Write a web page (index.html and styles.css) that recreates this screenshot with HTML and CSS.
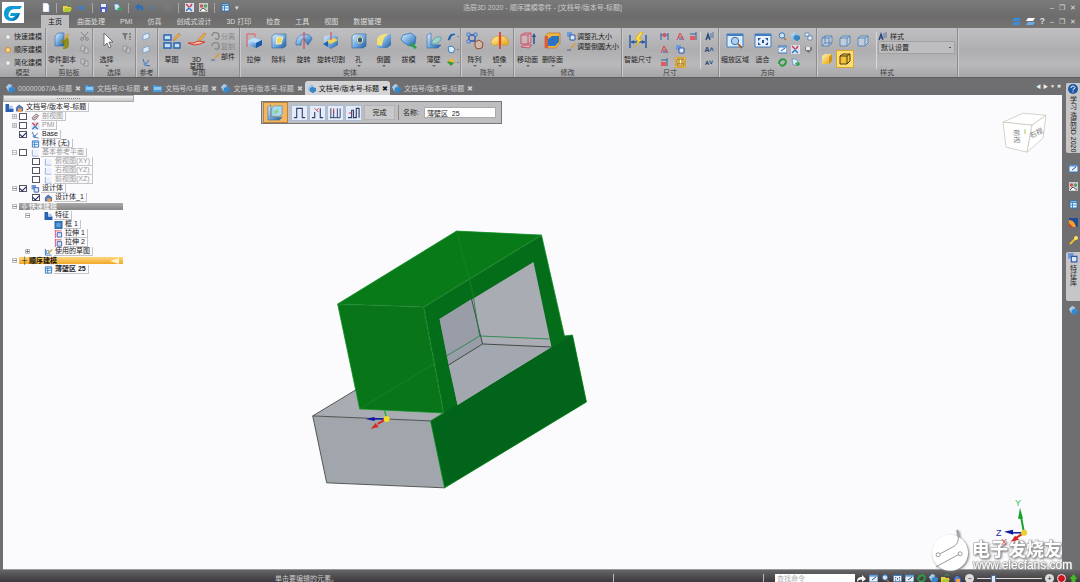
FILE: index.html
```html
<!DOCTYPE html>
<html lang="zh-CN">
<head>
  <meta charset="UTF-8">
  <meta name="viewport" content="width=device-width, initial-scale=1">
  <title>浩辰3D 2020</title>
  <link rel="stylesheet" href="styles.css">
</head>
<body>
  <!-- Shared icons -->
  <svg class="sprite" aria-hidden="true">
    <defs>
      <linearGradient id="blue" x1="0" y1="0" x2="1" y2="1">
        <stop offset="0" stop-color="#e4f2fc"/><stop offset=".5" stop-color="#76ade0"/><stop offset="1" stop-color="#1f5a9c"/>
      </linearGradient>
      <linearGradient id="gold" x1="0" y1="0" x2="1" y2="1">
        <stop offset="0" stop-color="#fff2a8"/><stop offset="1" stop-color="#e3a010"/>
      </linearGradient>
    </defs>
    <symbol id="i-copy" viewBox="0 0 18 18"><path d="M2 4l3-3h6v13H2z" fill="url(#blue)" stroke="#2c64a4" stroke-width=".6"/><path d="M9 12c0-5 3-5 3 0s3 5 3-1-2-6-2-2 0 8-3 7" fill="none" stroke="#8c8a10" stroke-width="1.8"/><path d="M15 3l-3 4M14 2l2 2" stroke="#e9a01c" stroke-width="1.5"/></symbol>
    <symbol id="i-pointer" viewBox="0 0 18 18"><path d="M6 1v13l3-3 2 5 2-1-2-5h4z" fill="#fff" stroke="#555" stroke-width=".8"/></symbol>
    <symbol id="i-sketch" viewBox="0 0 18 18"><path d="M1 3h7v5H1zM1 11h7v5H1zM11 11h6v5h-6z" fill="#c6ddf2" stroke="#2463b4" stroke-width="1.4"/><path d="M10 8l6-7 1 2-6 6z" fill="#f3b33c" stroke="#a3661c" stroke-width=".5"/></symbol>
    <symbol id="i-sketch3d" viewBox="0 0 18 18"><path d="M0 11h6l4-2 7 1-5 2-6 1z" fill="#f5c0b0" stroke="#d6392d"/><path d="M10 8l6-7 2 1-6 7z" fill="#f3b33c" stroke="#a3661c" stroke-width=".5"/></symbol>
    <symbol id="i-extrude" viewBox="0 0 18 18"><path d="M2 15V2h8v3" fill="none" stroke="#e25a62"/><path d="M3 9l5-3 9 2v5l-6 3-8-3z" fill="url(#blue)"/><path d="M3 9l8 2 6-3-9-2z" fill="#b9dcf8"/><path d="M11 11l6-3v5l-6 3z" fill="#1b5aa6"/></symbol>
    <symbol id="i-cut" viewBox="0 0 18 18"><path d="M2 4l3-2h11v12l-3 2H2z" fill="url(#blue)" stroke="#316aa9" stroke-width=".6"/><path d="M7 5h6l-2 7H6z" fill="#ecd85a" stroke="#fff" stroke-width=".7"/></symbol>
    <symbol id="i-revolve" viewBox="0 0 18 18"><path d="M1 13C0 0 16 0 17 7l-4 6-4-5h2C9 5 6 7 6 13z" fill="url(#blue)" stroke="#2b65a8" stroke-width=".6"/><path d="M9 0v17" stroke="#e1353a"/></symbol>
    <symbol id="i-revcut" viewBox="0 0 18 18"><path d="M2 5l7-3 7 3v8l-7 4-7-4z" fill="url(#blue)"/><path d="M4 9l8-3 4 2-7 4z" fill="#f2d35a"/><path d="M1 12l5-3v6z" fill="#245fa9"/><path d="M9 0v8" stroke="#e1353a"/></symbol>
    <symbol id="i-hole" viewBox="0 0 18 18"><path d="M2 4l3-2h11v12l-3 2H2z" fill="url(#blue)" stroke="#316aa9" stroke-width=".6"/><ellipse cx="10" cy="8" rx="2.6" ry="3.2" fill="#2b5a86" stroke="#f3e48b"/></symbol>
    <symbol id="i-round" viewBox="0 0 18 18"><path d="M2 15V8c1-4 5-6 9-6h5v11l-4 3H2z" fill="url(#blue)"/><path d="M2 13V8c1-4 5-6 9-6h3C9 4 8 8 7 14z" fill="#f6df73"/></symbol>
    <symbol id="i-draft" viewBox="0 0 18 18"><path d="M3 3l8-2 5 4-1 7-6 2-6-4-2-3z" fill="url(#blue)" stroke="#1f6eb4" stroke-width=".7"/><path d="M10 11l4 1 3 4-3 1-1-2-2 0z" fill="#29a04a"/></symbol>
    <symbol id="i-shell" viewBox="0 0 18 18"><path d="M2 3l4-2v12h10l-3 3H2z" fill="url(#blue)" stroke="#316aa9" stroke-width=".6"/><path d="M7 9l4-4h5v3l-5 4H7z" fill="#9dd4c1" stroke="#4c8fc0" stroke-width=".7"/></symbol>
    <symbol id="i-region" viewBox="0 0 18 18"><path d="M1 3l3-2v13h12l-3 3H1z" fill="url(#blue)" stroke="#316aa9" stroke-width=".6"/><path d="M5 4l3-2h8v9l-3 2H5z" fill="#a9d9ee" stroke="#4c8fc0" stroke-width=".7"/><path d="M7 8l5-3v4l-4 2z" fill="#8fcf9a"/></symbol>
    <symbol id="i-pattern" viewBox="0 0 18 18"><path d="M3 3h6v6H3z" fill="none" stroke="#2a56b0" stroke-width="1.3"/><path d="M1 1h3v3H1zM8 1h3v3H8zM1 8h3v3H1z" fill="#9fc3ee" stroke="#2a56b0" stroke-width=".6"/><path d="M9 10l4-2 4 3-1 5-5 1-2-3z" fill="#d0b9a8" stroke="#98482c"/></symbol>
    <symbol id="i-mirror" viewBox="0 0 18 18"><path d="M0 11c0-4 4-7 8-7v8c-3 2-6 2-8-1zM18 11c0-4-4-7-8-7v8c3 2 6 2 8-1z" fill="url(#gold)" stroke="#d48b10" stroke-width=".6"/><path d="M9 0v17" stroke="#e23424" stroke-width="1.6"/></symbol>
    <symbol id="i-moveface" viewBox="0 0 18 18"><path d="M2 3l4-2h6v9l-3 2H2zM2 3h7l3-2M9 3v9M2 15l3-2h8l-3 3z" fill="#dfb5c3" fill-opacity=".5" stroke="#cf5268"/><path d="M15 12V4" stroke="#23549a" stroke-width="1.5"/><path d="M15 1l2 4h-4z" fill="#23549a"/></symbol>
    <symbol id="i-delface" viewBox="0 0 18 18"><path d="M1 4l3-3h12v10l-4 5H1z" fill="#f0b53e" stroke="#b36d14" stroke-width=".6"/><path d="M4 7l4-3h7v6l-4 4H4z" fill="#2974c4"/><path d="M1 4h3v12H1z" fill="#e2583b"/></symbol>
    <symbol id="i-smartdim" viewBox="0 0 18 18"><path d="M1 3v13M17 3v13M2 10h14" stroke="#235aa4" stroke-width="1.4"/><path d="M2 10l3-2v4zM16 10l-3-2v4z" fill="#235aa4"/><path d="M11 0L6 8h3l-3 7 7-8h-3l4-7z" fill="#ffe23b" stroke="#cf9312" stroke-width=".5"/></symbol>
    <symbol id="i-zoomarea" viewBox="0 0 18 18"><path d="M1 2h16v13H1z" fill="#dceafa" stroke="#3f7dc3"/><path d="M1 2h16v2H1z" fill="#3f7dc3"/><circle cx="9" cy="9" r="3.7" fill="#a9d0ef" stroke="#3c70a8"/><path d="M12 12l4 4" stroke="#a06232" stroke-width="1.8"/></symbol>
    <symbol id="i-fit" viewBox="0 0 18 18"><path d="M1 2h16v13H1z" fill="#e8f1fb" stroke="#3f7dc3"/><path d="M1 2h16v2H1z" fill="#3f7dc3"/><path d="M4 6h3L4 9zM14 6h-3l3 3zM4 13h3l-3-3zM14 13h-3l3-3zM8 8h2v3H8z" fill="#21508e"/></symbol>

    <symbol id="s-page" viewBox="0 0 9 9"><path d="M2 0h4l2 2v7H2z" fill="#fff" stroke="#9db8d6" stroke-width=".6"/></symbol>
    <symbol id="s-open" viewBox="0 0 9 9"><path d="M0 3h4l1 1h3v4H0z" fill="#e8d648"/><path d="M2 5h7L7 9H0z" fill="#b5ca30"/><path d="M4 2c1-2 3-2 4 0" fill="none" stroke="#49b04b"/></symbol>
    <symbol id="s-link" viewBox="0 0 9 9"><path d="M1 3h4l3 2-3 2H2z" fill="#3d7fc4"/></symbol>
    <symbol id="s-save" viewBox="0 0 9 9"><path d="M1 1h7v8H1z" fill="#4b61c4"/><path d="M2 1h5v3H2zM3 6h3v3H3z" fill="#f0f3fc"/></symbol>
    <symbol id="s-part" viewBox="0 0 9 9"><path d="M0 3l3-3 3 1v2l3 1v3L6 9 2 7z" fill="url(#blue)"/><path d="M3 4l3-1 3 2-3 4-3-2z" fill="#3389cb"/></symbol>
    <symbol id="s-partgreen" viewBox="0 0 9 9"><path d="M1 1h4l2 3v3H2z" fill="#d8e9f7" stroke="#367eb8" stroke-width=".6"/><path d="M4 5l2 3 3-1-1-3z" fill="#36a452"/></symbol>
    <symbol id="s-undo" viewBox="0 0 9 9"><path d="M0 4l4-4v2c4 0 6 3 3 7 0-3-1-3-3-3v2z" fill="#2d6eb5"/></symbol>
    <symbol id="s-undoff" viewBox="0 0 9 9"><path d="M0 4l4-4v2c4 0 6 3 3 7 0-3-1-3-3-3v2z" fill="#888"/></symbol>
    <symbol id="s-mark" viewBox="0 0 9 9"><path d="M0 0h9v9H0z" fill="#dce3ee"/><path d="M1 1l3 3M7 1L5 4" stroke="#d33a55" stroke-width="1.5"/><path d="M1 8l3-3 3 3" fill="none" stroke="#327bc8" stroke-width="1.5"/></symbol>
    <symbol id="s-sheet" viewBox="0 0 9 9"><path d="M1 1h7v7H1z" fill="#eef6fd" stroke="#2f72b8"/><path d="M1 2.500h7M2 5h5M3.500 2v6" stroke="#3c8ad0"/></symbol>
    <symbol id="s-cutoff" viewBox="0 0 9 9"><path d="M1 0l5 6M8 0L3 6" stroke="#888"/><circle cx="2" cy="7" r="1.400" fill="none" stroke="#888"/><circle cx="7" cy="7" r="1.400" fill="none" stroke="#888"/></symbol>
    <symbol id="s-copyoff" viewBox="0 0 9 9"><path d="M1 1h4v5H1zM4 3h4v5H4z" fill="#c6c6c6" stroke="#8b8b8b" stroke-width=".8"/></symbol>
    <symbol id="s-filter" viewBox="0 0 9 9"><path d="M0 1h6L4 4v4L2 6V4z" fill="#777"/><path d="M8 1v7" stroke="#4a4a4a" stroke-dasharray="2 1"/></symbol>
    <symbol id="s-plane" viewBox="0 0 9 9"><path d="M1 3l6-2v5L1 8z" fill="#dfeaf5" stroke="#6c9fd0" stroke-width=".8"/></symbol>
    <symbol id="s-axes" viewBox="0 0 9 9"><path d="M1 1l2 6 5 1M3 7l4-5" fill="none" stroke="#3b6daa"/><circle cx="3" cy="6" r="1.500" fill="#5c95cf"/></symbol>
    <symbol id="s-rotoff" viewBox="0 0 9 9"><path d="M1 4C1-1 8 0 8 4S5 8 4 6" fill="none" stroke="#8a8a8a" stroke-width="1.500"/></symbol>
    <symbol id="s-pencil" viewBox="0 0 9 9"><path d="M0 8h4" stroke="#3e6ba7"/><path d="M3 6l5-5 1 1-5 5z" fill="#d69d33"/></symbol>
    <symbol id="s-usedsketch" viewBox="0 0 9 9"><path d="M1 1v7h7" fill="none" stroke="#2c6fb6"/><path d="M2 3h3v3H2z" fill="#fff" stroke="#2c6fb6" stroke-width=".8"/><path d="M4 6l4-5 1 1-4 5z" fill="#d69d33"/></symbol>
    <symbol id="s-rib" viewBox="0 0 9 9"><path d="M1 7c3 1 0-5 7-5" fill="none" stroke="#2264a9" stroke-width="2.200"/><path d="M4 1h4" stroke="#a9d6f5"/></symbol>
    <symbol id="s-gem" viewBox="0 0 9 9"><path d="M1 2l4-1 3 3-2 4-4-1z" fill="#d8eaf9" stroke="#3e7cc0"/></symbol>
    <symbol id="s-section" viewBox="0 0 9 9"><path d="M1 5l4-4 3 2-4 5-3-1z" fill="#ddd" stroke="#777"/><path d="M2 6l5-3" stroke="#b55"/></symbol>
    <symbol id="s-add" viewBox="0 0 9 9"><path d="M0 4l4-2 4 2-4 4z" fill="#2f9b44"/><path d="M1 3l3-3 3 2v3z" fill="#efb53a"/></symbol>
    <symbol id="s-dimr" viewBox="0 0 9 9"><path d="M1 1v7M8 1v7M1 3h7" stroke="#355ea2"/><path d="M3 1h3v4H3z" fill="#de5361"/></symbol>
    <symbol id="s-angle" viewBox="0 0 9 9"><path d="M1 8l3-7 4 7M2 5h5" fill="none" stroke="#d6464f"/><path d="M3 7h4" stroke="#2f62aa"/></symbol>
    <symbol id="s-coord" viewBox="0 0 9 9"><path d="M1 4h5v4H1z" fill="#e45a60"/><path d="M7 0v8M1 2h6" stroke="#35619f"/></symbol>
    <symbol id="s-grid" viewBox="0 0 9 9"><path d="M1 1h7v7H1zM3 1v5M6 1v5M1 6h7" fill="#fff4a4" stroke="#9b6417"/></symbol>
    <symbol id="s-text" viewBox="0 0 9 9"><path d="M1 8l2-6 2 6M2 6h2" fill="none" stroke="#1f3f78" stroke-width="1.200"/><path d="M6 1v5M8 0v6" stroke="#5376a7"/></symbol>
    <symbol id="s-zoom" viewBox="0 0 9 9"><circle cx="4" cy="3.500" r="2.700" fill="#cfe3f5" stroke="#3573b5"/><path d="M6 6l2 2" stroke="#aa6a33" stroke-width="1.500"/></symbol>
    <symbol id="s-win" viewBox="0 0 9 9"><path d="M0 1h9v7H0z" fill="#e9f2fb" stroke="#3e7ac0"/><path d="M0 2h9" stroke="#3e7ac0"/><path d="M3 6l4-3" stroke="#305b91"/></symbol>
    <symbol id="s-greenrot" viewBox="0 0 9 9"><path d="M1 6c0-5 5-6 7-3M8 3c0 5-5 6-6 3" fill="none" stroke="#2c9b48" stroke-width="1.900"/></symbol>
    <symbol id="s-stack" viewBox="0 0 9 9"><path d="M1 1h4v3H1zM4 4h4v4H4z" fill="#edf4fb" stroke="#5683b6" stroke-width=".8"/></symbol>
    <symbol id="s-heart" viewBox="0 0 9 9"><path d="M1 2h7v3L4.500 8 1 5z" fill="#777"/><path d="M2 2h4v3H2z" fill="#e7e7e7"/></symbol>
    <symbol id="s-key" viewBox="0 0 9 9"><path d="M1 8l5-5" stroke="#f0c02c" stroke-width="1.800"/><circle cx="7" cy="2" r="2" fill="#ffe36b"/></symbol>
    <symbol id="s-color" viewBox="0 0 9 9"><path d="M0 0h9v9H0z" fill="#244a97"/><path d="M0 9V2c4 0 6 3 7 7z" fill="#f0a12c"/><path d="M0 9V5l4 4z" fill="#d83c2e"/></symbol>
    <symbol id="s-people" viewBox="0 0 9 9"><path d="M0 0h9v9H0z" fill="#ccc"/><circle cx="2.500" cy="3" r="1.700" fill="#d05058"/><circle cx="6.500" cy="3" r="1.700" fill="#53a463"/><path d="M1 8l3-3 4 3" fill="#fff" stroke="#555"/></symbol>
    <symbol id="s-frame" viewBox="0 0 9 9"><path d="M0 0h9v9H0z" fill="#2d6db0"/><path d="M2 2h5v5H2z" fill="#5ba0dc"/></symbol>
    <symbol id="s-doc" viewBox="0 0 9 9"><path d="M0 1h3v1h6v6H0z" fill="#4a9bdc"/><path d="M1 3h7v3H1z" fill="#8cc8f2"/></symbol>
    <symbol id="s-ext" viewBox="0 0 9 9"><path d="M1 0v9M1 1h7" stroke="#dd4864" fill="none"/><path d="M3 3h5v5H3z" fill="#d9e4fa" stroke="#3c57ad"/></symbol>
    <symbol id="s-planebox" viewBox="0 0 9 9"><path d="M1 1v7h7" fill="none" stroke="#8fa7dc"/><path d="M2 1h6v6H2z" fill="#eef1fc"/></symbol>
    <symbol id="s-bodies" viewBox="0 0 9 9"><path d="M0 0h5v5H0z" fill="#6d9ad8"/><path d="M3 3h5v5H3z" fill="#dce8fa" stroke="#3159a6"/></symbol>
    <symbol id="s-feature" viewBox="0 0 9 9"><path d="M0 0h4v5h5v4H0z" fill="#2b62b0"/><path d="M4 2h4v3H4z" fill="#a9c9ef"/></symbol>
    <symbol id="s-home" viewBox="0 0 9 9"><path d="M1 8V4l3-3 4 3v4z" fill="#5a7fc4" stroke="#25427f" stroke-width=".7"/><path d="M3 5h4v4H3z" fill="#f0a248"/></symbol>
    <symbol id="s-cube" viewBox="0 0 12 12"><path d="M1 3l3-2h7v7l-3 3H1zM1 3h7v8M8 3l3-2M4 1v7h7M4 8l-3 3" fill="#c8dcf0" fill-opacity=".6" stroke="#5585b8" stroke-width=".9"/></symbol>
    <symbol id="s-cubehid" viewBox="0 0 12 12"><path d="M1 3l3-2h7v7l-3 3H1zM1 3h7v8M8 3l3-2" fill="#c8dcf0" fill-opacity=".6" stroke="#5585b8" stroke-width=".9"/></symbol>
    <symbol id="s-cubegold" viewBox="0 0 12 12"><path d="M1 3l3-2h7v7l-3 3H1z" fill="url(#gold)"/><path d="M8 4l3-3v7l-3 3z" fill="#d19014"/></symbol>
    <symbol id="s-cubeedge" viewBox="0 0 12 12"><path d="M1 3l3-2h7v7l-3 3H1zM1 3h7v8M8 3l3-2" fill="#f3c43a" stroke="#4d3a10"/></symbol>
    <symbol id="p-step" viewBox="0 0 14 12"><path d="M1 11h3V1h6v10h3" fill="none" stroke="#333b6c" stroke-width="1.200"/></symbol>
    <symbol id="p-open" viewBox="0 0 14 12"><path d="M1 11h3V5M10 1v10h3" fill="none" stroke="#333b6c" stroke-width="1.200"/><path d="M4 1l4 4M8 1L6 3" stroke="#cf3649"/></symbol>
    <symbol id="p-dir" viewBox="0 0 14 12"><path d="M1 11h11M2 1v10M5 3v8M9 1v10M12 1v10" fill="none" stroke="#333b6c"/><path d="M5 1v5" stroke="#cf3649"/></symbol>
    <symbol id="p-thick" viewBox="0 0 14 12"><path d="M1 11h4V3h2v8h3V1h3v10" fill="none" stroke="#333b6c" stroke-width="1.200"/><path d="M2 6h3" stroke="#cf3649"/></symbol>
  </svg>

  <!-- Title bar and ribbon tabs -->
  <header class="app-header">
    <button class="app-logo" aria-label="浩辰3D">
      <svg viewBox="0 0 22 20"><path d="M20 3H9C4 3 2 7 2 11s3 7 7 7c5 0 7-3 9-8H9l-1 3h5c-4 4-8 1-6-3 1-3 3-4 6-4h5z" fill="#0d9bd6"/><path d="M18 10c-1 5-4 8-9 8 3-2 4-3 5-5z" fill="#0876b2"/></svg>
    </button>
    <div class="header-rows">
      <div class="title-row">
        <div class="quick-tools">
          <button aria-label="新建"><svg><use href="#s-page"/></svg></button>
          <i class="tool-sep"></i>
          <button aria-label="打开"><svg><use href="#s-open"/></svg></button>
          <button aria-label="链接"><svg><use href="#s-link"/></svg></button>
          <i class="tool-sep"></i>
          <button aria-label="保存"><svg><use href="#s-save"/></svg></button>
          <button aria-label="另存"><svg><use href="#s-partgreen"/></svg></button>
          <i class="tool-sep"></i>
          <button aria-label="撤销"><svg><use href="#s-undo"/></svg></button>
          <button aria-label="重做" class="faint"><svg><use href="#s-link"/></svg></button>
          <button aria-label="恢复" class="faint"><svg><use href="#s-undoff"/></svg></button>
          <i class="tool-sep"></i>
          <button aria-label="标记"><svg><use href="#s-mark"/></svg></button>
          <button aria-label="检查"><svg><use href="#s-people"/></svg></button>
          <i class="tool-sep"></i>
          <button aria-label="属性表"><svg><use href="#s-sheet"/></svg></button>
          <button aria-label="自定义">▾</button>
        </div>
        <p class="app-title">浩辰3D 2020 - 顺序建模零件 - [文档号/版本号-标题]</p>
        <div class="window-tools">
          <button aria-label="最小化">–</button>
          <button aria-label="还原">❐</button>
          <button aria-label="关闭">✕</button>
        </div>
      </div>
      <nav class="tab-row">
        <a href="#" class="tab active">主页</a>
        <a href="#" class="tab">曲面处理</a>
        <a href="#" class="tab">PMI</a>
        <a href="#" class="tab">仿真</a>
        <a href="#" class="tab">创成式设计</a>
        <a href="#" class="tab">3D 打印</a>
        <a href="#" class="tab">检查</a>
        <a href="#" class="tab">工具</a>
        <a href="#" class="tab">视图</a>
        <a href="#" class="tab">数据管理</a>
        <div class="window-tools">
          <button aria-label="窗口层叠"><svg viewBox="0 0 9 9"><path d="M2 1h7L7 4H0zM2 5h7L7 8H0z" fill="#3e8bd8"/></svg></button>
          <button aria-label="窗口平铺"><svg viewBox="0 0 9 9"><path d="M2 1h7L7 4H0z" fill="#fff"/><path d="M2 5h7L7 8H0z" fill="#68aeea"/></svg></button>
          <button aria-label="帮助" class="help">?</button>
          <button aria-label="最小化文档">–</button>
          <button aria-label="还原文档">❐</button>
          <button aria-label="关闭文档">✕</button>
        </div>
      </nav>
    </div>
  </header>

  <!-- Ribbon -->
  <div class="ribbon">
    <section class="group">
      <div class="group-body modes">
        <label><input type="radio" name="mode">快速建模</label>
        <label><input type="radio" name="mode" checked>顺序建模</label>
        <label><input type="radio" name="mode">简化建模</label>
      </div>
      <h2>模型</h2>
    </section>
    <section class="group">
      <div class="group-body">
        <button class="big drop"><svg><use href="#i-copy"/></svg>零件副本</button>
        <div class="smalls">
          <button aria-label="剪切"><svg><use href="#s-cutoff"/></svg></button>
          <button aria-label="复制"><svg><use href="#s-copyoff"/></svg></button>
          <button aria-label="粘贴"><svg><use href="#s-copyoff"/></svg></button>
        </div>
      </div>
      <h2>剪贴板</h2>
    </section>
    <section class="group">
      <div class="group-body">
        <button class="big drop"><svg><use href="#i-pointer"/></svg>选择</button>
        <div class="smalls">
          <button aria-label="过滤器"><svg><use href="#s-filter"/></svg></button>
          <button aria-label="选择选项"><svg><use href="#s-copyoff"/></svg></button>
        </div>
      </div>
      <h2>选择</h2>
    </section>
    <section class="group">
      <div class="group-body">
        <div class="smalls">
          <button aria-label="平面"><svg><use href="#s-plane"/></svg></button>
          <button aria-label="参考平面"><svg><use href="#s-plane"/></svg></button>
          <button aria-label="坐标系"><svg><use href="#s-axes"/></svg></button>
        </div>
      </div>
      <h2>参考</h2>
    </section>
    <section class="group">
      <div class="group-body">
        <button class="big"><svg><use href="#i-sketch"/></svg>草图</button>
        <button class="big"><svg><use href="#i-sketch3d"/></svg>3D<br>草图</button>
        <div class="texts">
          <button disabled><svg><use href="#s-rotoff"/></svg>分离</button>
          <button disabled><svg><use href="#s-rotoff"/></svg>复制</button>
          <button><svg><use href="#s-pencil"/></svg>部件</button>
        </div>
      </div>
      <h2>草图</h2>
    </section>
    <section class="group">
      <div class="group-body">
        <button class="big"><svg><use href="#i-extrude"/></svg>拉伸</button>
        <button class="big"><svg><use href="#i-cut"/></svg>除料</button>
        <button class="big"><svg><use href="#i-revolve"/></svg>旋转</button>
        <button class="big"><svg><use href="#i-revcut"/></svg>旋转切割</button>
        <button class="big drop"><svg><use href="#i-hole"/></svg>孔</button>
        <button class="big drop"><svg><use href="#i-round"/></svg>倒圆</button>
        <button class="big"><svg><use href="#i-draft"/></svg>拔模</button>
        <button class="big drop"><svg><use href="#i-shell"/></svg>薄壁</button>
        <div class="smalls arrows">
          <button aria-label="扫掠"><svg><use href="#s-rib"/></svg></button>
          <button aria-label="放样"><svg><use href="#s-gem"/></svg></button>
          <button aria-label="添加体"><svg><use href="#s-add"/></svg></button>
        </div>
      </div>
      <h2>实体</h2>
    </section>
    <section class="group">
      <div class="group-body">
        <button class="big drop"><svg><use href="#i-pattern"/></svg>阵列</button>
        <button class="big drop"><svg><use href="#i-mirror"/></svg>镜像</button>
      </div>
      <h2>阵列</h2>
    </section>
    <section class="group">
      <div class="group-body">
        <button class="big drop"><svg><use href="#i-moveface"/></svg>移动面</button>
        <button class="big drop"><svg><use href="#i-delface"/></svg>删除面</button>
        <div class="texts">
          <button><svg><use href="#s-bodies"/></svg>调整孔大小</button>
          <button><svg><use href="#s-pencil"/></svg>调整倒圆大小</button>
        </div>
      </div>
      <h2>修改</h2>
    </section>
    <section class="group">
      <div class="group-body">
        <button class="big"><svg><use href="#i-smartdim"/></svg>智能尺寸</button>
        <div class="icon-grid wide-first">
          <button aria-label="间距"><svg><use href="#s-dimr"/></svg></button>
          <button aria-label="角度"><svg><use href="#s-angle"/></svg></button>
          <button aria-label="坐标标注"><svg><use href="#s-coord"/></svg></button>
          <button aria-label="夹角"><svg><use href="#s-angle"/></svg></button>
          <button aria-label="复制尺寸"><svg><use href="#s-bodies"/></svg></button>
          <span></span>
          <button aria-label="坐标尺寸"><svg><use href="#s-coord"/></svg></button>
          <button aria-label="尺寸网格" class="on"><svg><use href="#s-grid"/></svg></button>
        </div>
        <div class="smalls divided">
          <button aria-label="文字样式"><svg><use href="#s-text"/></svg></button>
          <button aria-label="增大文字" class="letter">A˄</button>
          <button aria-label="减小文字" class="letter">ᴀ˅</button>
        </div>
      </div>
      <h2>尺寸</h2>
    </section>
    <section class="group">
      <div class="group-body">
        <button class="big"><svg><use href="#i-zoomarea"/></svg>缩放区域</button>
        <button class="big"><svg><use href="#i-fit"/></svg>适合</button>
        <div class="icon-grid">
          <button aria-label="缩放"><svg><use href="#s-zoom"/></svg></button>
          <button aria-label="前视图"><svg><use href="#s-part"/></svg></button>
          <button aria-label="层叠"><svg><use href="#s-stack"/></svg></button>
          <button aria-label="平移"><svg><use href="#s-win"/></svg></button>
          <button aria-label="旋转视图"><svg><use href="#s-mark"/></svg></button>
          <button aria-label="常用视图"><svg><use href="#s-heart"/></svg></button>
          <button aria-label="刷新"><svg><use href="#s-greenrot"/></svg></button>
          <button aria-label="视图面"><svg><use href="#s-partgreen"/></svg></button>
        </div>
      </div>
      <h2>方向</h2>
    </section>
    <section class="group">
      <div class="group-body">
        <div class="view-styles">
          <button aria-label="线框"><svg><use href="#s-cube"/></svg></button>
          <button aria-label="隐藏线"><svg><use href="#s-cubehid"/></svg></button>
          <button aria-label="可见边"><svg><use href="#s-cubehid"/></svg></button>
          <button aria-label="着色"><svg><use href="#s-cubegold"/></svg></button>
          <button aria-label="带边着色" class="on"><svg><use href="#s-cubeedge"/></svg></button>
        </div>
        <div class="style-pick">
          <label for="style"><svg><use href="#s-text"/></svg>样式</label>
          <select id="style"><option>默认设置</option></select>
        </div>
      </div>
      <h2>样式</h2>
    </section>
  </div>

  <div class="work">
    <div class="work-main">
      <!-- Open documents -->
      <nav class="doc-tabs">
        <div class="doc"><svg><use href="#s-part"/></svg><a href="#">00000067/A-标题</a><button aria-label="关闭">✖</button></div>
        <div class="doc"><svg><use href="#s-doc"/></svg><a href="#">文档号/0-标题</a><button aria-label="关闭">✖</button></div>
        <div class="doc"><svg><use href="#s-doc"/></svg><a href="#">文档号/0-标题</a><button aria-label="关闭">✖</button></div>
        <div class="doc"><svg><use href="#s-part"/></svg><a href="#">文档号/版本号-标题</a><button aria-label="关闭">✖</button></div>
        <div class="doc active"><svg><use href="#s-part"/></svg><a href="#">文档号/版本号-标题</a><button aria-label="关闭">✖</button></div>
        <div class="doc"><svg><use href="#s-part"/></svg><a href="#">文档号/版本号-标题</a><button aria-label="关闭">✖</button></div>
        <div class="doc-nav">
          <button aria-label="上一个">◀</button><button aria-label="下一个">▶</button><button aria-label="列表">▼</button><button aria-label="关闭文档">✖</button>
        </div>
      </nav>

      <main class="canvas">
        <!-- Model, view cube and axes -->
        <svg class="scene" viewBox="3 95 1060 474" preserveAspectRatio="xMidYMid meet">
          <g stroke-linejoin="round">
            <path d="M313 416l43-26 4 19 84 4-13 8z" fill="#a9adb3"/>
            <path d="M313 416l118 5 14 67-118-5z" fill="#a1a5ac"/>
            <path d="M356 390l-43 26 118 5M313 416l14 67 118 5" fill="none" stroke="#333a33" stroke-width=".8"/>
            <path d="M338 304l119-73 85 4-118 72z" fill="#087a18"/>
            <path d="M338 304l86 3 20 106-84-4z" fill="#077518"/>
            <path d="M424 307l118-72 23 101 8-1 14 67-142 86-14-67 13-8z" fill="#046d19"/>
            <path d="M431 421l142-86 14 67-142 86z" fill="#02631a"/>
            <path d="M360 409l76-46M457 231l18 69M424 307l20 106M338 304l86 3 118-72" fill="none" stroke="#178428" stroke-opacity=".5" stroke-width="2"/>
            <path d="M338 304l119-73 85 4 23 101 8-1 14 67-142 86-14-67 13-8-84-4z" fill="none" stroke="#0d8e22" stroke-width=".8"/>
            <path d="M440 319l94-57 18 85-94 58z" fill="#a9acb3"/>
            <path d="M440 319l32-20 11 45-34 21z" fill="#999da7"/>
            <path d="M449 365l34-21 69 3-94 58z" fill="#a3a7af"/>
            <path d="M472 299l11 45 69 3M483 344l-34 21" fill="none" stroke="#29332c" stroke-width=".8"/>
            <path d="M474 298l6 38 70 3M480 336l-33 20" fill="none" stroke="#17823b" stroke-width=".8"/>
          </g>
          <path d="M387 418l-2-7" stroke="#21b429" stroke-width="1.500"/>
          <path d="M387 419h-13" stroke="#1212a8" stroke-width="1.500"/><path d="M366 419l9-2v4z" fill="#1212a8"/>
          <path d="M387 419l-9 5" stroke="#d92a20" stroke-width="2"/><path d="M371 429l5-6 3 4z" fill="#d92a20"/>
          <circle cx="387" cy="419" r="3" fill="#f4dc22"/>

          <g fill="#fff" stroke="#c3cbbd" stroke-width=".8">
            <path d="M1004 122l20-9 23 2-14 10z"/><path d="M1004 122l29 3-5 27-21-5z"/><path d="M1033 125l14-10-3 23-16 14z"/>
          </g>
          <text class="cube-text" transform="translate(1015 129) rotate(88)">前视</text>
          <text class="cube-text" transform="translate(1032 138) rotate(-25)">右视</text>
          <path d="M1026 129v5" stroke="#b9bd4c"/>

          <!-- Site mark in the corner -->
          <g class="site-mark">
            <path d="M958 530c3 8 1 12-2 16" fill="none" stroke="#aaa" stroke-width="2"/>
            <circle cx="951" cy="553" r="18" fill="#fff"/>
            <path d="M941 554l13-7c6-3 6-9 4-16M959 555l-22 12" fill="none" stroke="#999"/>
            <circle cx="939" cy="555" r="2" fill="none" stroke="#999"/><circle cx="961" cy="554" r="2" fill="none" stroke="#999"/>
            <text class="mark-name" x="973" y="556">电子发烧友</text>
            <text class="mark-url" x="974" y="569">www.elecfans.com</text>
          </g>

          <path d="M1025 533l-3-16" stroke="#13a32d" stroke-width="2"/><path d="M1021 508l-2 11h5z" fill="#13a32d"/>
          <path d="M1025 533h-12" stroke="#101c9c" stroke-width="1.500"/><path d="M1005 532l9-2v5z" fill="#101c9c"/>
          <path d="M1025 533l-8 5" stroke="#cf251c" stroke-width="2"/><path d="M1012 542l4-6 4 4z" fill="#cf251c"/>
          <circle cx="1025" cy="533" r="3" fill="#e9d12a"/>
          <text class="axis axis-y" x="1016" y="506">Y</text>
          <text class="axis axis-z" x="997" y="536">Z</text>
          <text class="axis axis-x" x="1002" y="545">X</text>
        </svg>

        <!-- Feature tree -->
        <aside class="tree-panel">
          <div class="grip"></div>
          <ul class="tree">
            <li class="root"><svg><use href="#s-feature"/></svg><svg><use href="#s-home"/></svg><span>文档号/版本号-标题</span></li>
            <li class="l1 off"><i class="exp">+</i><input type="checkbox" id="t1"><svg><use href="#s-section"/></svg><label for="t1">剖视图</label></li>
            <li class="l1 off"><i class="exp">+</i><input type="checkbox" id="t2"><svg><use href="#s-mark"/></svg><label for="t2">PMI</label></li>
            <li class="l1"><i></i><input type="checkbox" id="t3" checked><svg><use href="#s-axes"/></svg><label for="t3">Base</label></li>
            <li class="l1"><i></i><i></i><svg><use href="#s-sheet"/></svg><span>材料 (无)</span></li>
            <li class="l1 off"><i class="exp">−</i><input type="checkbox" id="t4"><svg><use href="#s-planebox"/></svg><label for="t4">基本参考平面</label></li>
            <li class="l2 off"><i></i><input type="checkbox" id="t5"><svg><use href="#s-planebox"/></svg><label for="t5">俯视图(XY)</label></li>
            <li class="l2 off"><i></i><input type="checkbox" id="t6"><svg><use href="#s-planebox"/></svg><label for="t6">右视图(YZ)</label></li>
            <li class="l2 off"><i></i><input type="checkbox" id="t7"><svg><use href="#s-planebox"/></svg><label for="t7">前视图(XZ)</label></li>
            <li class="l1"><i class="exp">−</i><input type="checkbox" id="t8" checked><svg><use href="#s-bodies"/></svg><label for="t8">设计体</label></li>
            <li class="l2"><i></i><input type="checkbox" id="t9" checked><svg><use href="#s-home"/></svg><label for="t9">设计体_1</label></li>
            <li class="l1"><i class="exp">−</i><strong class="bar">╬ 快速建模</strong></li>
            <li class="l2"><i class="exp">−</i><i></i><svg><use href="#s-feature"/></svg><span>特征</span></li>
            <li class="l3"><i></i><i></i><svg><use href="#s-frame"/></svg><span>框 1</span></li>
            <li class="l3"><i></i><i></i><svg><use href="#s-ext"/></svg><span>拉伸 1</span></li>
            <li class="l3"><i></i><i></i><svg><use href="#s-ext"/></svg><span>拉伸 2</span></li>
            <li class="l2"><i class="exp">+</i><i></i><svg><use href="#s-usedsketch"/></svg><span>使用的草图</span></li>
            <li class="l1"><i class="exp">−</i><strong class="bar current">┼ 顺序建模</strong></li>
            <li class="l2"><i></i><i></i><svg><use href="#s-sheet"/></svg><span class="bold">薄壁区 25</span></li>
          </ul>
        </aside>

        <!-- Command bar -->
        <form class="command-bar">
          <button type="button" class="cmd-main" aria-label="薄壁区"><svg><use href="#i-region"/></svg></button>
          <div class="steps">
            <button type="button" aria-label="公共厚度"><svg><use href="#p-step"/></svg></button>
            <button type="button" aria-label="开放面"><svg><use href="#p-open"/></svg></button>
            <button type="button" aria-label="加厚面"><svg><use href="#p-dir"/></svg></button>
            <button type="button" aria-label="唯一厚度"><svg><use href="#p-thick"/></svg></button>
          </div>
          <button type="button" class="done">完成</button>
          <label for="name">名称:</label>
          <input type="text" id="name" value="薄壁区_25">
        </form>
      </main>
    </div>

    <!-- Side docking tabs -->
    <aside class="dock">
      <a href="#" class="dock-tab"><svg viewBox="0 0 10 10"><circle cx="5" cy="5" r="5" fill="#1f57a6"/><path d="M3 4c0-3 4-2 4 0L5 5.500V6.500M5 7.500v1" fill="none" stroke="#fff"/></svg>学习 浩辰3D 2020</a>
      <div class="dock-icons">
        <button aria-label="图层"><svg><use href="#s-win"/></svg></button>
        <button aria-label="族"><svg><use href="#s-people"/></svg></button>
        <button aria-label="传感器"><svg><use href="#s-sheet"/></svg></button>
        <button aria-label="颜色"><svg><use href="#s-color"/></svg></button>
        <button aria-label="钥匙"><svg><use href="#s-key"/></svg></button>
      </div>
      <a href="#" class="dock-tab lib"><svg><use href="#s-bodies"/></svg>特征库</a>
      <div class="dock-icons last">
        <button aria-label="仿真"><svg><use href="#s-part"/></svg></button>
      </div>
    </aside>
  </div>

  <!-- Status bar -->
  <footer class="status">
    <p>单击要编辑的元素。</p>
    <div class="status-find"><input type="search" placeholder="查找命令" aria-label="查找命令"></div>
    <div class="status-tools">
      <button aria-label="转到"><svg viewBox="0 0 9 9"><path d="M0 8c0-4 2-5 5-5V1l4 4-4 3V6C3 5 2 6 0 8z" fill="#fff"/></svg></button>
      <button aria-label="窗口"><svg><use href="#s-win"/></svg></button>
      <button aria-label="缩放"><svg><use href="#s-zoom"/></svg></button>
      <button aria-label="适合"><svg><use href="#i-fit"/></svg></button>
      <button aria-label="平移"><svg><use href="#s-win"/></svg></button>
      <button aria-label="旋转"><svg><use href="#s-greenrot"/></svg></button>
      <button aria-label="视图方向"><svg><use href="#s-part"/></svg></button>
      <button aria-label="样式"><svg><use href="#s-open"/></svg></button>
      <button aria-label="窗口布局"><svg><use href="#s-home"/></svg></button>
      <button aria-label="缩小" class="round">−</button>
      <input type="range" min="0" max="100" value="24" aria-label="缩放比例">
      <button aria-label="放大" class="round">+</button>
      <button aria-label="录制" class="rec"></button>
      <button aria-label="上传"><svg viewBox="0 0 9 9"><path d="M4.500 0l4 5h-2v4h-4V5h-2z" fill="#48b52c"/></svg></button>
    </div>
  </footer>
</body>
</html>
```

FILE: styles.css
```css
* {
  box-sizing: border-box;
}
body {
  margin: 0;
  min-height: 100vh;
  display: flex;
  flex-direction: column;
  background: #6f6e70;
  color: #222;
  font: 7px/9px "Liberation Sans", "Noto Sans CJK SC", sans-serif;
  overflow: hidden;
}
button, input, select {
  font: inherit;
  color: inherit;
  margin: 0;
  padding: 0;
}
button {
  border: 0;
  background: none;
  white-space: nowrap;
}
a {
  color: inherit;
  text-decoration: none;
}
p, h2, ul {
  margin: 0;
  padding: 0;
}
svg {
  width: 9px;
  height: 9px;
  flex: none;
  display: block;
}
.sprite {
  position: absolute; /* definitions only, takes no room */
  width: 0;
  height: 0;
}

/* Title bar */
.app-header {
  display: flex;
  height: 28px;
  background: linear-gradient(#7b7a7b, #6d6c6c 60%, #757372);
  color: #ddd;
}
.app-logo {
  width: 22px;
  height: 21px;
  margin: 2px 17px 0 2px;
  background: #fff;
}
.app-logo svg {
  width: 22px;
  height: 20px;
}
.header-rows {
  flex: 1;
}
.title-row {
  display: flex;
  height: 15px;
  align-items: center;
}
.quick-tools {
  flex: 1;
  display: flex;
  align-items: center;
  gap: 5px;
}
.faint {
  opacity: 0.3;
}
.tool-sep {
  width: 1px;
  height: 10px;
  margin: 0 1px;
  background: #a5a5a5;
}
.app-title {
  color: #c9c9c9;
}
.window-tools {
  flex: 1;
  display: flex;
  justify-content: flex-end;
  gap: 5px;
  padding-right: 4px;
}
.title-row .window-tools {
  flex-basis: 36px; /* balances the logo so the title stays centered */
}
.help {
  font-size: 9px;
  font-weight: 700;
}
.tab-row {
  display: flex;
  height: 13px;
  gap: 1px;
}
.tab {
  padding: 2px 7px;
}
.tab.active {
  background: #bdbcbe;
  color: #111;
}

/* Ribbon */
.ribbon {
  display: grid;
  grid-template-columns: 46px 47px 43px 22px 82px 221px 53px 108px 97px 98px 141px;
  height: 50px;
  background: linear-gradient(#c0bfc1, #aeadaf 45%, #b9b8ba 75%, #a5a4a6);
  border-bottom: 1px solid #5e5d5f;
}
.group {
  display: flex;
  flex-direction: column;
  border-right: 1px solid #8d8c8e;
  box-shadow: 1px 0 #c9c8ca;
}
.group h2 {
  font-size: 7px;
  font-weight: 400;
  line-height: 8px;
  text-align: center;
  color: #3c3c3c;
}
.group-body {
  display: flex;
  height: 41px;
  padding: 4px 1px 0;
}
.modes {
  flex-direction: column;
  gap: 4px;
  padding-left: 5px;
}
.modes label {
  display: flex;
  align-items: center;
  gap: 3px;
}
.modes input {
  appearance: none;
  width: 6px;
  height: 6px;
  border: 1px solid #aaa;
  border-radius: 50%;
  background: #eee;
}
.modes input:checked {
  border-color: #d98a20;
  background: #ffd98a;
}
.big {
  display: flex;
  flex-direction: column;
  align-items: center;
  min-width: 25px;
  padding: 0 1px;
  line-height: 7px;
}
.big svg {
  width: 18px;
  height: 18px;
  margin-bottom: 6px;
}
.drop::after {
  content: "";
  margin-top: 2px;
  border: 2px solid transparent;
  border-top-color: #666;
  border-bottom: 0;
}
.smalls {
  flex: 1;
  display: flex;
  flex-direction: column;
  align-items: center;
  gap: 4px;
}
.smalls button {
  height: 9px;
}
.arrows button {
  display: flex;
  align-items: center;
  gap: 1px;
}
.arrows button::after {
  content: "";
  border: 1px solid transparent;
  border-top-color: #444;
  border-bottom: 0;
}
.divided {
  border-left: 1px solid #d8d8d8;
}
.letter {
  color: #23487e;
  font-weight: 700;
}
.texts {
  display: flex;
  flex-direction: column;
  gap: 1px;
  padding-left: 2px;
}
.texts button {
  display: flex;
  align-items: center;
  gap: 1px;
}
.texts button:disabled {
  color: #888;
}
.icon-grid {
  display: grid;
  grid-template-columns: repeat(3, 13px);
  grid-auto-rows: 13px;
  justify-items: center;
  align-items: start;
  margin-left: 1px;
}
.wide-first {
  grid-template-columns: 20px 13px 13px;
}
.on {
  background: #ffdf75;
  outline: 1px solid #dba32f;
}
.view-styles {
  display: grid;
  grid-template-columns: repeat(3, 18px);
  grid-auto-rows: 18px;
  place-items: center;
  width: 58px;
}
.view-styles svg {
  width: 12px;
  height: 12px;
}
.view-styles .on {
  padding: 2px;
}
.style-pick {
  flex: 1;
  border-left: 1px solid #d8d8d8;
  padding: 0 1px;
}
.style-pick label {
  display: flex;
  gap: 3px;
}
.style-pick select {
  appearance: none;
  width: 100%;
  height: 13px;
  padding: 0 2px;
  border: 1px solid #a2a2a3;
  border-radius: 0;
  background: linear-gradient(#555, #555) 96% 50% / 2px 1px no-repeat #bebdbf;
}

/* Workspace */
.work {
  flex: 1;
  display: flex;
}
.work-main {
  flex: 1;
  display: flex;
  flex-direction: column;
}
.doc-tabs {
  display: flex;
  align-items: flex-end;
  height: 17px;
  padding-left: 4px;
  color: #d0d0d0;
}
.doc {
  display: flex;
  align-items: center;
  gap: 3px;
  height: 14px;
  padding: 0 2px;
}
.doc button {
  width: 6px;
}
.doc.active {
  background: #d4d3d6;
  color: #111;
  border-radius: 3px 3px 0 0;
}
.doc-nav {
  display: flex;
  gap: 2px;
  margin-left: auto;
  padding: 0 1px 4px;
  color: #eee;
  font-size: 5px;
}
.canvas {
  flex: 1;
  position: relative;
  margin-left: 3px;
  background: #fbfafd;
  border-bottom: 1px solid #999;
}
.scene {
  position: absolute;
  inset: 0;
  width: 100%;
  height: 100%;
  overflow: visible;
  pointer-events: none;
  z-index: 1;
}
.cube-text {
  font-size: 7px;
  fill: #777;
}
.axis {
  font-size: 9px;
}
.axis-y {
  fill: #2cc34a;
}
.axis-z {
  fill: #1e2796;
}
.axis-x {
  fill: #d8574f;
}
.site-mark {
  filter: drop-shadow(1px 1px 1px #777);
}
.mark-name, .mark-url {
  fill: #fff;
  stroke: #aaa;
  stroke-width: 1px;
  paint-order: stroke;
}
.mark-name {
  font-size: 18px;
  font-weight: 700;
}
.mark-url {
  font-size: 12px;
}

/* Feature tree */
.tree-panel {
  width: 131px;
}
.grip {
  height: 7px;
  border: 1px solid #aaa;
  background: repeating-linear-gradient(90deg, #888 0 1px, transparent 1px 2px) center / 24px 1px no-repeat, linear-gradient(#eee, #c6c6c8);
}
.tree {
  list-style: none;
  padding-top: 1px;
}
.tree li {
  display: grid;
  grid-template-columns: 10px 10px 12px auto;
  justify-content: start;
  place-items: center start;
  height: 9px;
}
.tree li.root {
  grid-template-columns: 10px 11px auto;
  padding-left: 1px;
}
.tree li.l1 {
  padding-left: 6px;
}
.tree li.l2 {
  padding-left: 19px;
}
.tree li.l3 {
  padding-left: 29px;
}
.tree li > svg {
  height: 8px;
  justify-self: center;
}
.tree span, .tree label {
  padding: 0 2px 0 1px;
  line-height: 8px;
  border-right: 1px solid #c5c5c8;
  border-bottom: 1px solid #c5c5c8;
  white-space: nowrap;
}
.tree .off {
  color: #999;
}
.tree .bold {
  font-weight: 700;
}
.exp {
  width: 5px;
  height: 5px;
  justify-self: center;
  border: 1px solid #bbb;
  font-style: normal;
  line-height: 3px;
  text-align: center;
}
.tree input {
  appearance: none;
  width: 8px;
  height: 7px;
  border: 1px solid #556;
  background: #fff;
}
.tree input:checked::after {
  content: "";
  display: block;
  width: 5px;
  height: 3px;
  border: 1px solid #14225e;
  border-width: 0 0 1px 1px;
  transform: rotate(-45deg);
}
.bar {
  grid-column: 2 / 5;
  width: 104px;
  line-height: 7px;
  padding-left: 3px;
  color: #eee;
  background: linear-gradient(#aaa, #858585);
}
.bar.current {
  display: flex;
  justify-content: space-between;
  align-items: center;
  color: #111;
  background: linear-gradient(#ffd57d, #f0a928);
}
.bar.current::after {
  content: "";
  margin-right: 4px;
  border: 3px solid transparent;
  border-right: 9px solid #fff3cf;
  border-left: 0;
}

/* Floating command bar */
.command-bar {
  position: absolute;
  left: 258px;
  top: 6px;
  display: flex;
  align-items: center;
  height: 23px;
  padding: 0 5px 0 1px;
  border: 1px solid #77777a;
  background: #bebdc0;
}
.cmd-main {
  padding: 1px 3px;
  border: 1px solid #b9803c;
  background: #f2b660;
}
.cmd-main svg {
  width: 17px;
  height: 17px;
}
.steps {
  display: flex;
  gap: 1px;
  margin: 0 2px 0 3px;
}
.steps button {
  padding: 1px 1px;
  border: 1px solid #a9bdd6;
  background: #e3ecf8;
}
.steps svg {
  width: 13px;
  height: 12px;
}
.done {
  width: 31px;
  height: 15px;
  border: 1px solid #b3b2b4;
  background: #c9c8ca;
}
.command-bar label {
  margin-left: 3px;
  padding: 3px 5px 3px 4px;
  border-left: 1px solid #8a8a8c;
}
.command-bar input {
  width: 72px;
  height: 11px;
  padding: 0 2px;
  border: 1px solid #aaa;
  background: #fff;
}

/* Side dock */
.dock {
  display: flex;
  flex-direction: column;
  width: 18px;
  padding: 5px 0 0 4px;
}
.dock-tab {
  display: flex;
  align-items: center;
  gap: 2px;
  height: 70px;
  padding: 1px 2px;
  writing-mode: vertical-rl;
  white-space: nowrap;
  background: #c6c5c8;
  border-radius: 2px 0 0 2px;
}
.dock-tab svg {
  width: 10px;
  height: 10px;
}
.lib {
  height: 49px;
}
.dock-icons {
  display: flex;
  flex-direction: column;
  align-items: center;
  gap: 9px;
  padding: 11px 0 7px;
}
.dock-icons.last {
  padding-top: 5px;
}

/* Status bar */
.status {
  display: flex;
  align-items: flex-start;
  height: 12px;
  padding-top: 4px;
  overflow: hidden;
  background: linear-gradient(#656466, #3b393b);
  color: #ccc;
}
.status p {
  flex: 1;
  padding-left: 275px;
}
.status-find {
  width: 244px;
  padding-left: 162px;
  background: linear-gradient(#bbb, #bbb) 0 0 / 1px 9px no-repeat, linear-gradient(#bbb, #bbb) 150px 0 / 1px 9px no-repeat;
}
.status-find input {
  width: 80px;
  height: 9px;
  padding: 0 2px;
  border: 0;
  background: #fff;
  color: #333;
  appearance: none;
  display: block;
}
.status-find input::placeholder {
  color: #aaa;
}
.status-tools {
  display: flex;
  gap: 3px;
  padding-right: 2px;
}
.status-tools input {
  appearance: none;
  width: 65px;
  height: 9px;
  background: linear-gradient(#ddd, #ddd) center / 100% 1px no-repeat;
}
.status-tools input::-webkit-slider-thumb {
  appearance: none;
  width: 5px;
  height: 8px;
  border: 1px solid #49709f;
  background: #dcebfa;
}
.round {
  width: 9px;
  height: 9px;
  border-radius: 50%;
  background: #ddd;
  color: #222;
  line-height: 8px;
}
.rec {
  width: 9px;
  height: 9px;
  border: 1px solid #eee;
  border-radius: 50%;
  background: #d1141b;
}
```
